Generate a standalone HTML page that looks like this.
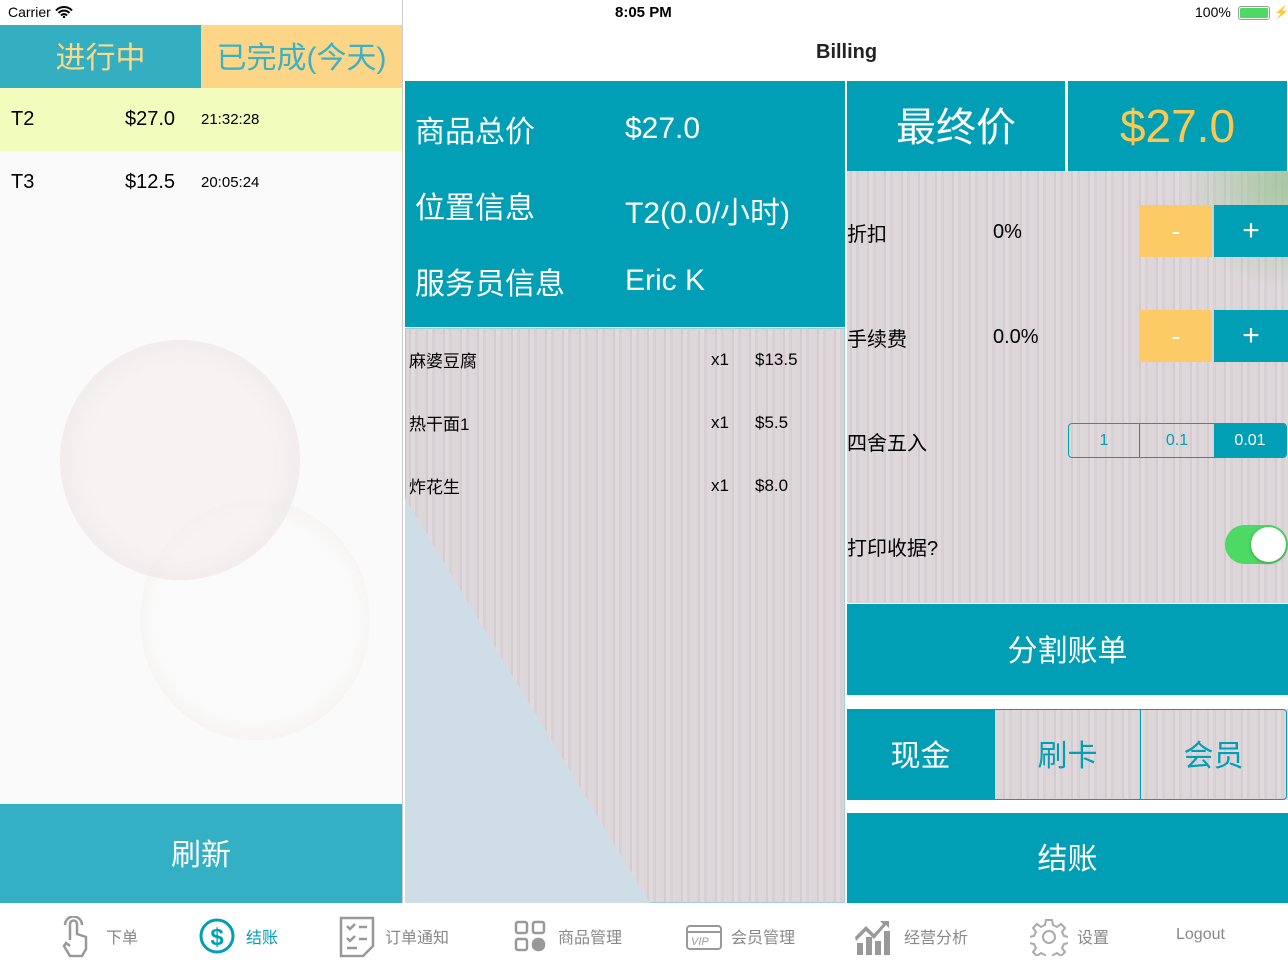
<!DOCTYPE html>
<html><head><meta charset="utf-8"><style>
*{margin:0;padding:0;box-sizing:border-box}
body{width:1288px;height:966px;position:relative;overflow:hidden;background:#fff;font-family:"Liberation Sans","Noto Sans CJK SC",sans-serif}
.a{position:absolute}
.c{display:flex;align-items:center;justify-content:center}
.wood{background:repeating-linear-gradient(90deg,#dcd6d9 0 3px,#d4ccd1 3px 5px,#e0dadd 5px 9px,#d8d0d5 9px 12px,#ddd7da 12px 17px)}
.teal{background:#009fb6;color:#fff}
</style></head><body>
<div class="a" style="left:8px;top:4px;font-size:14px">Carrier
<svg width="18" height="12" viewBox="0 0 18 12" style="vertical-align:-1px"><path d="M1 4.5a11 11 0 0 1 16 0M3.5 7a7.5 7.5 0 0 1 11 0M6 9.5a4 4 0 0 1 6 0" stroke="#000" stroke-width="2" fill="none"/><circle cx="9" cy="11" r="1.2"/></svg></div>
<div class="a" style="left:615px;top:4px;font-size:15px;font-weight:bold">8:05 PM</div>
<div class="a" style="left:1195px;top:4px;font-size:14px">100%</div>
<div class="a" style="left:1238px;top:6px;width:32px;height:14px;border:1px solid #999;border-radius:3px;padding:1px"><div style="background:#4cd964;width:100%;height:100%;border-radius:1px"></div></div>
<div class="a" style="left:1274px;top:5px;font-size:12px">⚡</div>

<!-- left -->
<div class="a c" style="left:0;top:25px;width:201px;height:63px;background:#33afc1;color:#fcd987;font-size:30px;padding-bottom:4px">进行中</div>
<div class="a c" style="left:201px;top:25px;width:201px;height:63px;background:#fcd686;color:#3ab1c4;font-size:30px;padding-bottom:4px">已完成(今天)</div>
<div class="a" style="left:0;top:88px;width:402px;height:63px;background:#f2fcbc"></div>
<div class="a" style="left:0;top:151px;width:402px;height:653px;background:#fafafa"></div>
<div class="a" style="left:140px;top:500px;width:230px;height:240px;border-radius:50%;background:radial-gradient(circle,#fbfbfb 60%,#e2d8d2);opacity:.6"></div>
<div class="a" style="left:60px;top:340px;width:240px;height:240px;border-radius:50%;background:radial-gradient(circle,#f6eeee 55%,#ddd4d1);opacity:.6"></div>
<div class="a" style="left:11px;top:108px;font-size:20px">T2</div><div class="a" style="left:125px;top:108px;font-size:20px">$27.0</div><div class="a" style="left:201px;top:111px;font-size:15px">21:32:28</div>
<div class="a" style="left:11px;top:171px;font-size:20px">T3</div><div class="a" style="left:125px;top:171px;font-size:20px">$12.5</div><div class="a" style="left:201px;top:174px;font-size:15px">20:05:24</div>
<div class="a c" style="left:0;top:804px;width:402px;height:99px;background:#33b0c3;color:#fff;font-size:30px;padding-bottom:4px">刷新</div>
<div class="a" style="left:402px;top:0;width:1px;height:903px;background:#ccc"></div>

<div class="a" style="left:816px;top:41px;font-size:20px;font-weight:bold;color:#222">Billing</div>

<!-- middle -->
<div class="a teal" style="left:405px;top:81px;width:440px;height:246px;font-size:30px">
<div class="a" style="left:10px;top:26px">商品总价</div><div class="a" style="left:220px;top:31px">$27.0</div>
<div class="a" style="left:10px;top:102px">位置信息</div><div class="a" style="left:220px;top:107px">T2(0.0/小时)</div>
<div class="a" style="left:10px;top:178px">服务员信息</div><div class="a" style="left:220px;top:183px">Eric K</div>
</div>
<div class="a wood" style="left:405px;top:328px;width:440px;height:575px;border:1px solid #9ccfd8"></div>
<svg class="a" style="left:405px;top:328px" width="440" height="575"><polygon points="0,170 0,575 245,575" fill="#cfdde6"/></svg>
<div class="a" style="left:409px;top:347px;font-size:17px">麻婆豆腐</div><div class="a" style="left:711px;top:350px;font-size:17px">x1</div><div class="a" style="left:755px;top:350px;font-size:17px">$13.5</div>
<div class="a" style="left:409px;top:410px;font-size:17px">热干面1</div><div class="a" style="left:711px;top:413px;font-size:17px">x1</div><div class="a" style="left:755px;top:413px;font-size:17px">$5.5</div>
<div class="a" style="left:409px;top:473px;font-size:17px">炸花生</div><div class="a" style="left:711px;top:476px;font-size:17px">x1</div><div class="a" style="left:755px;top:476px;font-size:17px">$8.0</div>

<!-- right -->
<div class="a wood" style="left:847px;top:171px;width:441px;height:432px"></div>
<div class="a" style="left:1180px;top:171px;width:108px;height:120px;background:radial-gradient(ellipse at 100% 10%,#8fc08a,transparent 70%);opacity:.7"></div>
<div class="a c teal" style="left:847px;top:81px;width:218px;height:90px;font-size:40px;padding-bottom:4px">最终价</div>
<div class="a c teal" style="left:1068px;top:81px;width:219px;height:90px;font-size:46px;color:#fcc84f">$27.0</div>
<div class="a" style="left:847px;top:218px;font-size:20px">折扣</div><div class="a" style="left:993px;top:221px;font-size:20px">0%</div>
<div class="a c" style="left:1140px;top:205px;width:72px;height:52px;background:#fdcb66;color:#fff;font-size:26px">-</div>
<div class="a c teal" style="left:1214px;top:205px;width:74px;height:52px;font-size:30px">+</div>
<div class="a" style="left:847px;top:323px;font-size:20px">手续费</div><div class="a" style="left:993px;top:326px;font-size:20px">0.0%</div>
<div class="a c" style="left:1140px;top:310px;width:72px;height:52px;background:#fdcb66;color:#fff;font-size:26px">-</div>
<div class="a c teal" style="left:1214px;top:310px;width:74px;height:52px;font-size:30px">+</div>
<div class="a" style="left:847px;top:427px;font-size:20px">四舍五入</div>
<div class="a" style="left:1068px;top:423px;width:219px;height:35px;border:1px solid #009fb6;border-radius:4px;overflow:hidden;display:flex;font-size:16px;color:#009fb6">
<div class="c" style="width:71px;border-right:1px solid #009fb6">1</div><div class="c" style="width:74px">0.1</div><div class="c teal" style="flex:1">0.01</div></div>
<div class="a" style="left:847px;top:532px;font-size:20px">打印收据?</div>
<div class="a" style="left:1225px;top:525px;width:63px;height:39px;border-radius:20px;background:#4cd964"><div class="a" style="right:2px;top:2px;width:35px;height:35px;border-radius:50%;background:#fff;box-shadow:0 1px 3px rgba(0,0,0,.3)"></div></div>
<div class="a c teal" style="left:847px;top:604px;width:441px;height:91px;font-size:30px;padding-bottom:4px">分割账单</div>
<div class="a wood" style="left:847px;top:709px;width:441px;height:91px"></div>
<div class="a c teal" style="left:847px;top:709px;width:147px;height:91px;font-size:30px;padding-bottom:4px">现金</div>
<div class="a c" style="left:994px;top:709px;width:147px;height:91px;border:1px solid #009fb6;font-size:30px;color:#009fb6;padding-bottom:4px">刷卡</div>
<div class="a c" style="left:1140px;top:709px;width:147px;height:91px;border:1px solid #009fb6;border-radius:0 4px 4px 0;font-size:30px;color:#009fb6;padding-bottom:4px">会员</div>
<div class="a c teal" style="left:847px;top:813px;width:441px;height:90px;font-size:30px;padding-bottom:4px">结账</div>

<!-- tab bar -->
<div class="a" style="left:0;top:903px;width:1288px;height:63px;background:#fff;font-size:16px;color:#888">
<svg class="a" style="left:62px;top:13px" width="30" height="42" viewBox="0 0 30 42" fill="none" stroke="#999" stroke-width="2.5"><path d="M8 24V8a3.5 3.5 0 0 1 7 0v10l9 3v12l-4 7H8l-6-10 2-3 4 3"/><path d="M3 9a8 8 0 0 1 17 0"/></svg>
<div class="a" style="left:106px;top:21px">下单</div>
<svg class="a" style="left:199px;top:15px" width="36" height="36" viewBox="0 0 36 36"><circle cx="18" cy="18" r="16" fill="none" stroke="#009fb6" stroke-width="3"/><text x="18" y="27" font-size="24" text-anchor="middle" fill="#009fb6" font-family="Liberation Sans" font-weight="bold">$</text></svg>
<div class="a" style="left:246px;top:21px;color:#009fb6">结账</div>
<svg class="a" style="left:339px;top:13px" width="36" height="42" viewBox="0 0 36 42" fill="none" stroke="#999" stroke-width="2.5"><path d="M2 2h32v28l-10 10H2z"/><path d="M8 10l3 3 5-5M20 11h8M8 22l3 3 5-5M20 23h8M8 32h10"/></svg>
<div class="a" style="left:385px;top:21px">订单通知</div>
<svg class="a" style="left:514px;top:17px" width="32" height="32" viewBox="0 0 32 32" fill="none" stroke="#999" stroke-width="2.5"><rect x="2" y="2" width="11" height="11" rx="2"/><rect x="19" y="2" width="11" height="11" rx="2"/><rect x="2" y="19" width="11" height="11" rx="2"/><rect x="19" y="19" width="11" height="11" rx="5" fill="#999"/></svg>
<div class="a" style="left:558px;top:21px">商品管理</div>
<svg class="a" style="left:686px;top:22px" width="36" height="25" viewBox="0 0 36 25" fill="none" stroke="#999" stroke-width="2"><rect x="1" y="1" width="34" height="23" rx="3"/><path d="M1 7h34"/><text x="5" y="20" font-size="11" fill="#999" stroke="none" font-style="italic" font-family="Liberation Sans">VIP</text></svg>
<div class="a" style="left:731px;top:21px">会员管理</div>
<svg class="a" style="left:855px;top:18px" width="40" height="34" viewBox="0 0 40 34" fill="#999"><rect x="2" y="22" width="6" height="12"/><rect x="11" y="16" width="6" height="18"/><rect x="20" y="20" width="6" height="14"/><rect x="29" y="10" width="6" height="24"/><path d="M1 20l10-10 8 8 12-14 3 3V0h-9l3 3-9 10-8-8L0 16z"/></svg>
<div class="a" style="left:904px;top:21px">经营分析</div>
<svg class="a" style="left:1030px;top:15px" width="38" height="38" viewBox="0 0 38 38" fill="none" stroke="#aaa" stroke-width="2"><path d="M16 2h6l1 5 4 2 4-3 4 4-3 4 2 4 5 1v6l-5 1-2 4 3 4-4 4-4-3-4 2-1 5h-6l-1-5-4-2-4 3-4-4 3-4-2-4-5-1v-6l5-1 2-4-3-4 4-4 4 3 4-2z"/><circle cx="19" cy="19" r="6"/></svg>
<div class="a" style="left:1077px;top:21px">设置</div>
<div class="a" style="left:1176px;top:23px">Logout</div>
</div>
</body></html>
